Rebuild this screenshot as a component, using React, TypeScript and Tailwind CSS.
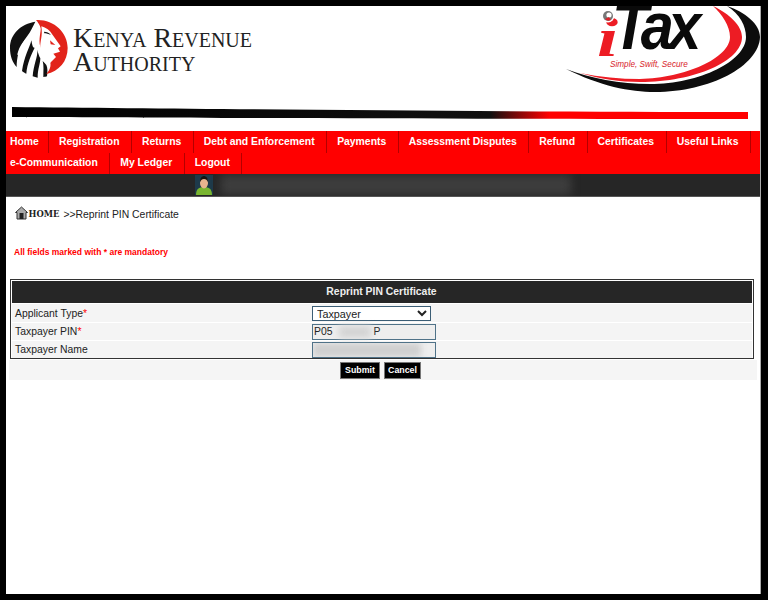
import React from "react";

const arial = { fontFamily: '"Liberation Sans", Arial, sans-serif' };

const row1 = [
  { label: "Home", cls: "pl-[4px] pr-[9px]" },
  { label: "Registration", cls: "pl-[10px] pr-[11.5px]" },
  { label: "Returns", cls: "pl-[10px] pr-[11.5px]" },
  { label: "Debt and Enforcement", cls: "pl-[10px] pr-[11.5px]" },
  { label: "Payments", cls: "pl-[10px] pr-[11.5px]" },
  { label: "Assessment Disputes", cls: "pl-[10px] pr-[11.5px]" },
  { label: "Refund", cls: "pl-[10px] pr-[11.5px]" },
  { label: "Certificates", cls: "pl-[10px] pr-[11.5px]" },
  { label: "Useful Links", cls: "pl-[10px] pr-[11.5px]" },
];

const row2 = [
  { label: "e-Communication", cls: "pl-[4px] pr-[11.5px]" },
  { label: "My Ledger", cls: "pl-[10px] pr-[11.5px]" },
  { label: "Logout", cls: "pl-[10px] pr-[11.5px]" },
];

const LionLogo = () => (
  <svg width="66" height="66" viewBox="0 0 198 198" className="shrink-0">
    <path d="M88 20C45 26 12 58 12 98c0 26 8 44 20 58 0-24 4-58 34-96 6-8 14-24 22-40z" fill="#111" />
    <path d="M34 118c6-26 20-44 38-58-8 18-18 30-20 48-10 14-14 20-18 10z" fill="#fff" />
    <path d="M76 76c-4 20-22 48-28 92 5 4 8 6 13 8 2-30 16-60 25-78-6 2-7-8-10-22z" fill="#111" />
    <path d="M94 104c2 20-12 46-14 80 5 2 10 3 15 4 0-26 8-42 8-58-4-8-7-16-9-26z" fill="#111" />
    <path d="M110 138c4 14 2 30 2 48 5 0 8-1 11-2 2-14 2-26-2-34-3-4-7-8-11-12z" fill="#111" />
    <path d="M90 15c52-3 95 36 95 84 0 40-26 70-64 78 14-16 16-30 8-46-8-12-24-24-28-44-2-24 6-44 2-50-2-8-8-16-13-22z" fill="#e2231a" />
    <path d="M106 34c14 4 26 12 34 26l24 34-8 6 6 10-20 6 8 10-18 18c-10-12-26-22-29-42-2-24 8-36 3-68z" fill="#fff" />
    <path d="M114 50c8 0 15 3 21 10-8-3-14-5-20-5z" fill="#111" />
    <path d="M132 76l16 14-14-2z" fill="#e2231a" />
  </svg>
);

const KraBrand = () => (
  <div className="flex items-start gap-px pt-[9px]">
    <LionLogo />
    <div
      className="mt-[11px] text-[#222] text-[27.9px] leading-[23.5px] [font-variant:small-caps] whitespace-nowrap"
      style={{ fontFamily: '"Liberation Serif", "Times New Roman", serif' }}
    >
      <div>Kenya Revenue</div>
      <div>Authority</div>
    </div>
  </div>
);

const ItaxBrand = () => (
  <div className="relative w-[200px] h-[94px] shrink-0 overflow-hidden" style={arial}>
    <svg width="200" height="94" viewBox="0 0 200 94" className="block">
      <path d="M6 63C40 80 70 86 95 86 150 86 199 60 200 31 200 18 185 6 167 0 180 8 186 20 186 31 186 55 140 78 90 78 60 78 30 72 6 63z" fill="#0d0d0d" />
      <path d="M20 67C40 73 60 76 80 76 135 76 182 55 182 31 182 20 170 8 153 0 162 8 170 20 170 31 170 52 125 72 80 73 60 73 40 71 20 67z" fill="#ed1c24" />
    </svg>
    <span
      className="absolute left-[37px] top-[5px] text-[#ed1c24] text-[54px] leading-none font-bold italic scale-x-[1.4] origin-left"
      style={{ fontFamily: '"Liberation Serif", serif' }}
    >
      i
    </span>
    <svg width="14" height="14" viewBox="0 0 14 14" className="absolute left-[41px] top-[3px]">
      <circle cx="7" cy="7" r="6.5" fill="#fff" />
      <circle cx="7" cy="7" r="5" fill="#777" />
      <circle cx="8" cy="6" r="2.6" fill="#fff" />
      <path d="M4 10a5 5 0 0 0 6 1l-2-3z" fill="#d8232a" />
    </svg>
    <span className="absolute left-[52px] top-[-13px] text-[#0a0a0a] text-[66px] leading-none italic font-bold tracking-[-6px] scale-x-90 origin-left">
      Tax
    </span>
    <span className="absolute left-[50px] top-[55px] text-[#d8232a] text-[8.2px] leading-none italic whitespace-nowrap">
      Simple, Swift, Secure
    </span>
  </div>
);

const SwooshBar = () => (
  <svg width="738" height="14" viewBox="0 0 738 14" className="block ml-[5px] mt-[5px]">
    <defs>
      <linearGradient id="swoosh" x1="0" x2="1" y1="0" y2="0">
        <stop offset="0" stopColor="#000" />
        <stop offset="0.65" stopColor="#111" />
        <stop offset="0.73" stopColor="#f00" />
        <stop offset="1" stopColor="#f00" />
      </linearGradient>
    </defs>
    <path d="M1 1C200 3 500 6 737 6V13C500 13 200 12 1 11z" fill="url(#swoosh)" />
  </svg>
);

const NavRow = ({ items }: { items: { label: string; cls: string }[] }) => (
  <ul className="flex h-[21.5px]">
    {items.map((item) => (
      <li
        key={item.label}
        className={`flex items-center h-full border-r border-[#b40000] text-white font-bold text-[10.4px] whitespace-nowrap ${item.cls}`}
      >
        {item.label}
      </li>
    ))}
  </ul>
);

const Avatar = () => (
  <svg width="18" height="20" viewBox="0 0 18 20" className="block relative">
    <rect width="18" height="20" fill="#1e3a4a" />
    <path d="M1 20c0-6 3-8 8-8s8 2 8 8z" fill="#79b530" />
    <ellipse cx="9" cy="8" rx="4" ry="5.4" fill="#e8b48e" />
    <path d="M5 7c0-4 2-6 4-6s4 2 4 6c-1-2-2-3-4-3S6 5 5 7z" fill="#17130f" />
  </svg>
);

const HomeIcon = () => (
  <svg width="13" height="14" viewBox="0 0 13 14" className="block mt-[-4px]">
    <path d="M0.5 6.5L6.5 1l6 5.5H11V13H2V6.5z" fill="#aaa" stroke="#333" strokeWidth="1" />
    <path d="M4.5 7h4v6h-4z" fill="#222" />
  </svg>
);

const Star = () => <span className="text-[#f00]">*</span>;

const App = () => {
  return (
    <div className="w-[768px] h-[600px] bg-black pt-[6px] pb-[6px] pl-[6px] pr-[7px]" style={arial}>
      <div className="h-full bg-white border-r border-[#aaa] overflow-hidden">
        <header className="h-[125px]">
          <div className="flex justify-between items-start h-[95px]">
            <KraBrand />
            <ItaxBrand />
          </div>
          <SwooshBar />
        </header>

        <nav className="bg-[#f00] h-[43px]">
          <NavRow items={row1} />
          <NavRow items={row2} />
        </nav>

        <div className="flex items-center h-[23px] bg-[#262626] border-b border-[#555] pl-[189px] overflow-hidden">
          <Avatar />
          <div className="ml-[8px] w-[350px] h-[20px] bg-[#3d3d3d] blur-[4px]" />
        </div>

        <div className="flex items-center pl-[9px] pt-[9px] h-[26px] text-[#222] text-[10.4px]">
          <HomeIcon />
          <span
            className="font-bold text-[8.4px] text-[#222] ml-[0.5px]"
            style={{ fontFamily: '"DejaVu Serif", serif' }}
          >
            HOME
          </span>
          <span className="ml-[4px]">&gt;&gt;Reprint PIN Certificate</span>
        </div>

        <p className="pl-[8px] pt-[23px] text-[#f00] font-bold text-[8.5px] leading-[12px]">
          All fields marked with * are mandatory
        </p>

        <section className="mt-[21px] ml-[4px] w-[744px] h-[80px] border border-[#333] px-px pt-px">
          <h2 className="h-[22px] flex items-center justify-center bg-[#262626] text-[#eee] font-bold text-[10.4px] pr-px">
            Reprint PIN Certificate
          </h2>
          <div className="text-[#222] text-[10.4px] pt-px">
            <div className="flex items-center h-[19px] bg-[#f4f4f4] border-b border-white pl-[3px]">
              <label className="w-[297px] mt-px">
                Applicant Type
                <Star />
              </label>
              <select
                defaultValue="Taxpayer"
                className="w-[119px] h-[15px] bg-white border border-[#3b5d75] text-[10.8px] leading-none"
              >
                <option>Taxpayer</option>
              </select>
            </div>
            <div className="flex items-center h-[18px] bg-[#f4f4f4] border-b border-white pl-[3px]">
              <label className="w-[297px]">
                Taxpayer PIN
                <Star />
              </label>
              <div className="flex items-center w-[124px] h-[16px] bg-[#eee] border border-[#4f7288] pl-[1px]">
                <span>P05</span>
                <span className="ml-[6px] w-[32px] h-[12px] bg-[#d4d4d4] blur-[3px]" />
                <span className="ml-[3px]">P</span>
              </div>
            </div>
            <div className="flex items-center h-[17px] bg-[#f4f4f4] pl-[3px]">
              <label className="w-[297px]">Taxpayer Name</label>
              <div className="w-[124px] h-[16px] bg-[#eee] border border-[#4f7288] overflow-hidden">
                <div className="h-full w-[108px] bg-[#cfcfcf] blur-[3px]" />
              </div>
            </div>
          </div>
        </section>

        <div className="flex justify-center items-center gap-[4px] mt-px ml-[3px] w-[748px] h-[20px] bg-[#f5f5f5] pr-[5px]">
          <button className="w-[40px] h-[17px] pt-px bg-black text-white font-bold text-[8.8px] border border-[#777]">
            Submit
          </button>
          <button className="w-[37px] h-[17px] pt-px bg-black text-white font-bold text-[8.8px] border border-[#777]">
            Cancel
          </button>
        </div>
      </div>
    </div>
  );
};

export default App;
